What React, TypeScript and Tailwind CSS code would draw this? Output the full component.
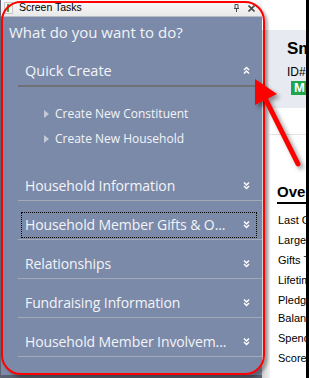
import React from "react";

const rows = [
  "Household Information",
  "Household Member Gifts & O...",
  "Relationships",
  "Fundraising Information",
  "Household Member Involvem...",
];

const stats = ["Last Gift", "Largest Gift", "Gifts This Year", "Lifetime Giving"];

function ChevronsDown() {
  return (
    <svg width="7" height="9" viewBox="0 0 7 9" className="shrink-0">
      <polyline points="1,1.5 3.5,4 6,1.5" fill="none" stroke="#ffffff" strokeWidth="1.5" />
      <polyline points="1,5 3.5,7.5 6,5" fill="none" stroke="#ffffff" strokeWidth="1.5" />
    </svg>
  );
}

function ChevronsUp() {
  return (
    <svg width="7" height="9" viewBox="0 0 7 9" className="shrink-0">
      <polyline points="1,4 3.5,1.5 6,4" fill="none" stroke="#ffffff" strokeWidth="1.5" />
      <polyline points="1,7.5 3.5,5 6,7.5" fill="none" stroke="#ffffff" strokeWidth="1.5" />
    </svg>
  );
}

function Bullet() {
  return (
    <svg width="5" height="8" viewBox="0 0 5 8" className="shrink-0">
      <polygon points="0,0 5,4 0,8" fill="#c3c9d6" />
    </svg>
  );
}

export default function App() {
  return (
    <div className="relative flex h-[378px] w-[309px] overflow-hidden bg-white">
      {/* ── TASK PANE ─────────────────────────── */}
      <div className="flex w-[262px] shrink-0 flex-col border-l border-[#5d6372]">
        <div className="flex h-[17px] items-center border-b border-[#b9bcc4] bg-gradient-to-b from-[#fafafa] to-[#e9e9e9] pl-[3px] pr-[7px] font-['Liberation_Sans',sans-serif] text-[10.5px] text-black">
          <svg width="10" height="12" viewBox="0 0 10 12" className="shrink-0">
            <rect x="0.5" y="0.5" width="8" height="11" fill="#f4f4f4" stroke="#9a9a9a" strokeDasharray="1 1" />
            <rect x="3" y="2" width="2" height="8" fill="#3da53d" />
          </svg>
          <span className="ml-[5px]">Screen Tasks</span>
          <div className="ml-auto flex items-center gap-[8px]">
            <svg width="7" height="8" viewBox="0 0 7 8">
              <path d="M1 4.5H6M2 0.5H5V4.5H2ZM3.5 4.5V8" fill="none" stroke="#4a4a4a" strokeWidth="1" />
            </svg>
            <svg width="7" height="7" viewBox="0 0 7 7">
              <path d="M0.5 0.5L6.5 6.5M6.5 0.5L0.5 6.5" stroke="#4a4a4a" strokeWidth="1.6" />
            </svg>
          </div>
        </div>

        <div className="flex flex-1 flex-col border-b-[3px] border-[#59606f] bg-[#7c8aa9] font-['Open_Sans',sans-serif] text-[#f2f4f8]">
          <div className="flex h-[31px] items-center pl-[8px] text-[15px]">What do you want to do?</div>

          <div className="ml-[17px] flex h-[39px] items-center border-b-2 border-[#6f7176] pl-[7px] pr-[12px] pt-[8px] text-[14.5px]">
            <span>Quick Create</span>
            <span className="ml-auto"><ChevronsUp /></span>
          </div>

          <div className="flex flex-col pb-[11px] pl-[43px] pt-[14px] text-[12px]">
            {["Create New Constituent", "Create New Household"].map((t) => (
              <div key={t} className="flex h-[25px] items-center gap-[6px]">
                <Bullet />
                <span>{t}</span>
              </div>
            ))}
          </div>

          {rows.map((r, i) => (
            <div
              key={r}
              className="relative ml-[17px] flex h-[39px] items-center border-b border-[#a3a9b6] pl-[7px] pr-[12px] pt-[8px] text-[14px]"
            >
              {i === 1 && (
                <div className="absolute bottom-[1px] left-[3px] right-[5px] top-[11px] border border-dotted border-black" />
              )}
              <span className="whitespace-nowrap tracking-[-0.1px]">{r}</span>
              <span className="ml-auto"><ChevronsDown /></span>
            </div>
          ))}
        </div>
      </div>

      {/* ── RECORD PAGE (cut off) ─────────────── */}
      <div className="flex min-w-0 flex-1 flex-col overflow-hidden">
        <div className="h-[30px] bg-white" />
        <div className="flex flex-1">
          <div className="w-[8px] shrink-0 bg-gradient-to-r from-[#cfcfcf] to-[#f2f2f2]" />
          <div className="flex min-w-0 flex-1 flex-col overflow-hidden font-['Liberation_Sans',sans-serif] text-black">
            <div className="flex h-[78px] flex-col bg-[#e7eaf1] pl-[17px] pt-[9px]">
              <div className="whitespace-nowrap text-[17px] font-bold leading-[20px]">Smith Household</div>
              <div className="mt-[6px] whitespace-nowrap text-[12px] leading-[14px]">ID# 8-10000126</div>
              <div className="mt-[2px] ml-[4px] flex h-[14px] w-[20px] shrink-0 items-center bg-[#1fa64b] pl-[3px] text-[13px] font-bold text-white">M</div>
            </div>
            <div className="h-[27px] border-b border-[#e4e4e4]" />
            <div className="ml-[7px] mt-[48px] whitespace-nowrap border-b-2 border-black pb-[1px] text-[15px] font-bold leading-[18px]">
              Overview
            </div>
            <div className="ml-[8px] mt-[7px] flex flex-col gap-[2px] whitespace-nowrap text-[11px] leading-[18px]">
              {stats.map((s) => (
                <div key={s}>{s}</div>
              ))}
              <div>
                Pledge
                <br />
                Balance
              </div>
              <div>Spending Total</div>
              <div>Score</div>
            </div>
          </div>
        </div>
      </div>
      <div className="w-[3px] shrink-0 bg-black" />

      {/* ── ANNOTATIONS ───────────────────────── */}
      <div className="pointer-events-none absolute left-[1px] top-[1px] h-[374px] w-[264px] rounded-[20px] border-2 border-[#ff0000] shadow-[3px_3px_3px_rgba(0,0,0,0.3)]" />
      <svg
        width="309"
        height="378"
        viewBox="0 0 309 378"
        className="pointer-events-none absolute left-0 top-0 drop-shadow-[3px_3px_2px_rgba(0,0,0,0.4)]"
      >
        <line x1="265" y1="98" x2="298" y2="164" stroke="#ff0000" strokeWidth="5" strokeLinecap="round" />
        <polygon points="255,79 277,94 255,105" fill="#ff0000" />
      </svg>
    </div>
  );
}
